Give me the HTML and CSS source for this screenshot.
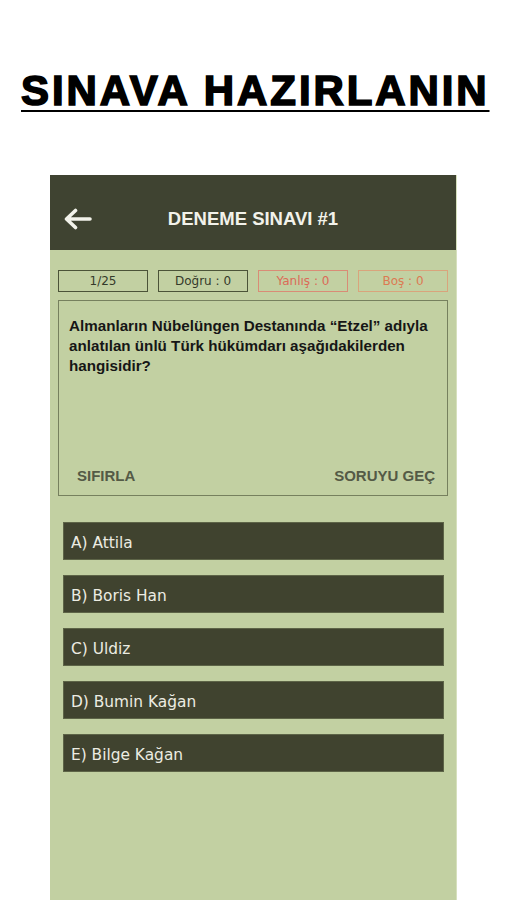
FILE: index.html
```html
<!DOCTYPE html>
<html lang="tr">
<head>
<meta charset="utf-8">
<title>Sınava Hazırlanın</title>
<link rel="stylesheet" href="styles.css">
</head>
<body>
<h1 class="promo-title"><span class="promo-text">SINAVA HAZIRLANIN</span></h1>
<div class="phone">
  <header class="app-bar">
    <span class="back">
      <svg width="30" height="22" viewBox="0 0 30 22" aria-hidden="true">
        <path d="M27 11H4M12.5 2.5L3.5 11l9 8.5" fill="none" stroke="#f2f2ea" stroke-width="3.6" stroke-linecap="round" stroke-linejoin="round"/>
      </svg>
    </span>
    <span class="app-title">DENEME SINAVI #1</span>
  </header>
  <div class="stats">
    <div class="stat stat-dark">1/25</div>
    <div class="stat stat-dark">Doğru : 0</div>
    <div class="stat stat-red">Yanlış : 0</div>
    <div class="stat stat-orange">Boş : 0</div>
  </div>
  <div class="question">
    <p class="q-text">Almanların Nübelüngen Destanında “Etzel” adıyla anlatılan ünlü Türk hükümdarı aşağıdakilerden hangisidir?</p>
    <div class="q-actions">
      <span class="q-link">SIFIRLA</span>
      <span class="q-link">SORUYU GEÇ</span>
    </div>
  </div>
  <div class="answers">
    <div class="answer">A) Attila</div>
    <div class="answer">B) Boris Han</div>
    <div class="answer">C) Uldiz</div>
    <div class="answer">D) Bumin Kağan</div>
    <div class="answer">E) Bilge Kağan</div>
  </div>
</div>
</body>
</html>
```
FILE: styles.css
```css
* { box-sizing: border-box; }
html, body { margin: 0; padding: 0; background: #ffffff; }
body { width: 507px; height: 900px; overflow: hidden; font-family: "Liberation Sans", Arial, sans-serif; }

.promo-title {
  margin: 0;
  padding: 67px 0 0 21px;
  font-family: "Liberation Sans", Arial, sans-serif;
  font-weight: 700;
  font-size: 42px;
  line-height: 48px;
  color: #000;
  white-space: nowrap;
}
.promo-text {
  letter-spacing: 2.9px;
  -webkit-text-stroke: 1.6px #000;
  text-decoration: underline;
  text-decoration-thickness: 2px;
  text-underline-offset: 5px;
}

.phone {
  margin: 60px 0 0 50px;
  width: 407px;
  height: 725px;
  background: #c2d0a2;
  border-right: 1px solid #d6e0bd;
}

.app-bar {
  height: 75px;
  background: #3f4331;
  display: flex;
  align-items: center;
  padding: 13px 13px 0 13px;
}
.back { display: flex; width: 30px; height: 22px; }
.app-title {
  flex: 1;
  text-align: center;
  margin-right: 30px;
  color: #f2f2ea;
  font-weight: 700;
  font-size: 18.5px;
}

.stats {
  display: grid;
  grid-template-columns: repeat(4, 1fr);
  gap: 10px;
  padding: 20px 8px 0 8px;
}
.stat {
  height: 22px;
  display: flex;
  align-items: center;
  justify-content: center;
  font-family: "DejaVu Sans", Verdana, sans-serif;
  font-size: 12px;
}
.stat-dark { border: 1.5px solid #4b5338; color: #343a2a; }
.stat-red { border: 1.5px solid #d98c76; color: #dc6a57; }
.stat-orange { border: 1.5px solid #d9a47c; color: #dc7a52; }

.question {
  margin: 8px 8px 0 8px;
  height: 196px;
  border: 1.5px solid #76805e;
  display: flex;
  flex-direction: column;
  justify-content: space-between;
  padding: 15px 10px 11px 10px;
}
.q-text {
  margin: 0;
  font-weight: 700;
  font-size: 15.2px;
  line-height: 20px;
  color: #161616;
}
.q-actions {
  display: flex;
  justify-content: space-between;
  padding: 0 2px 0 8px;
}
.q-link {
  font-weight: 700;
  font-size: 15px;
  color: #545a46;
}

.answers {
  display: flex;
  flex-direction: column;
  gap: 15px;
  padding: 26px 12px 0 13px;
}
.answer {
  height: 38px;
  background: #40432f;
  border: 1px solid #5d6447;
  display: flex;
  align-items: center;
  padding: 3px 0 0 7px;
  font-family: "DejaVu Sans", Verdana, sans-serif;
  font-size: 15.4px;
  color: #ecece2;
}
```
